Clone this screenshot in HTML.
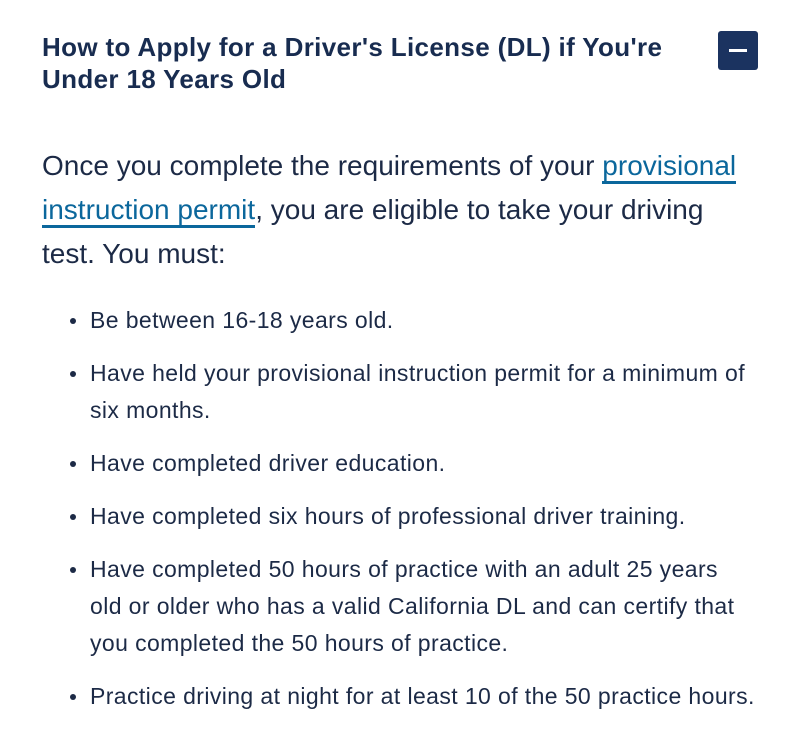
<!DOCTYPE html>
<html><head><style>
body{margin:0;background:#fff;font-family:"Liberation Sans",sans-serif;color:#1c2a46;width:798px;height:733px;overflow:hidden;position:relative}
h2{position:absolute;left:42px;top:31px;width:660px;margin:0;font-size:26px;line-height:32px;font-weight:bold;color:#182c50;letter-spacing:0.35px}
.btn{position:absolute;left:718px;top:31px;width:40px;height:39px;background:#1b3360;border-radius:3px}
.btn:after{content:"";position:absolute;left:11px;top:18px;width:18px;height:3px;background:#fff}
p{position:absolute;left:42px;top:144px;width:705px;margin:0;font-size:28px;line-height:44px}
a{color:#0b679c;text-decoration:none;border-bottom:3px solid #0b679c}
ul{position:absolute;left:0;top:302px;margin:0;padding:0 0 0 90px;width:690px;list-style:none;font-size:23px;line-height:37px;white-space:nowrap;letter-spacing:0.4px}
li{position:relative;margin-bottom:16px}
li:before{content:"";position:absolute;left:-20px;top:16px;width:6px;height:6px;border-radius:50%;background:#1c2a46}
</style></head><body>
<h2>How to Apply for a Driver's License (DL) if You're<br>Under 18 Years Old</h2>
<div class="btn"></div>
<p>Once you complete the requirements of your <a>provisional instruction permit</a>, you are eligible to take your driving test. You must:</p>
<ul>
<li>Be between 16-18 years old.</li>
<li>Have held your provisional instruction permit for a minimum of<br>six months.</li>
<li>Have completed driver education.</li>
<li>Have completed six hours of professional driver training.</li>
<li>Have completed 50 hours of practice with an adult 25 years<br>old or older who has a valid California DL and can certify that<br>you completed the 50 hours of practice.</li>
<li>Practice driving at night for at least 10 of the 50 practice hours.</li>
</ul>
</body></html>
